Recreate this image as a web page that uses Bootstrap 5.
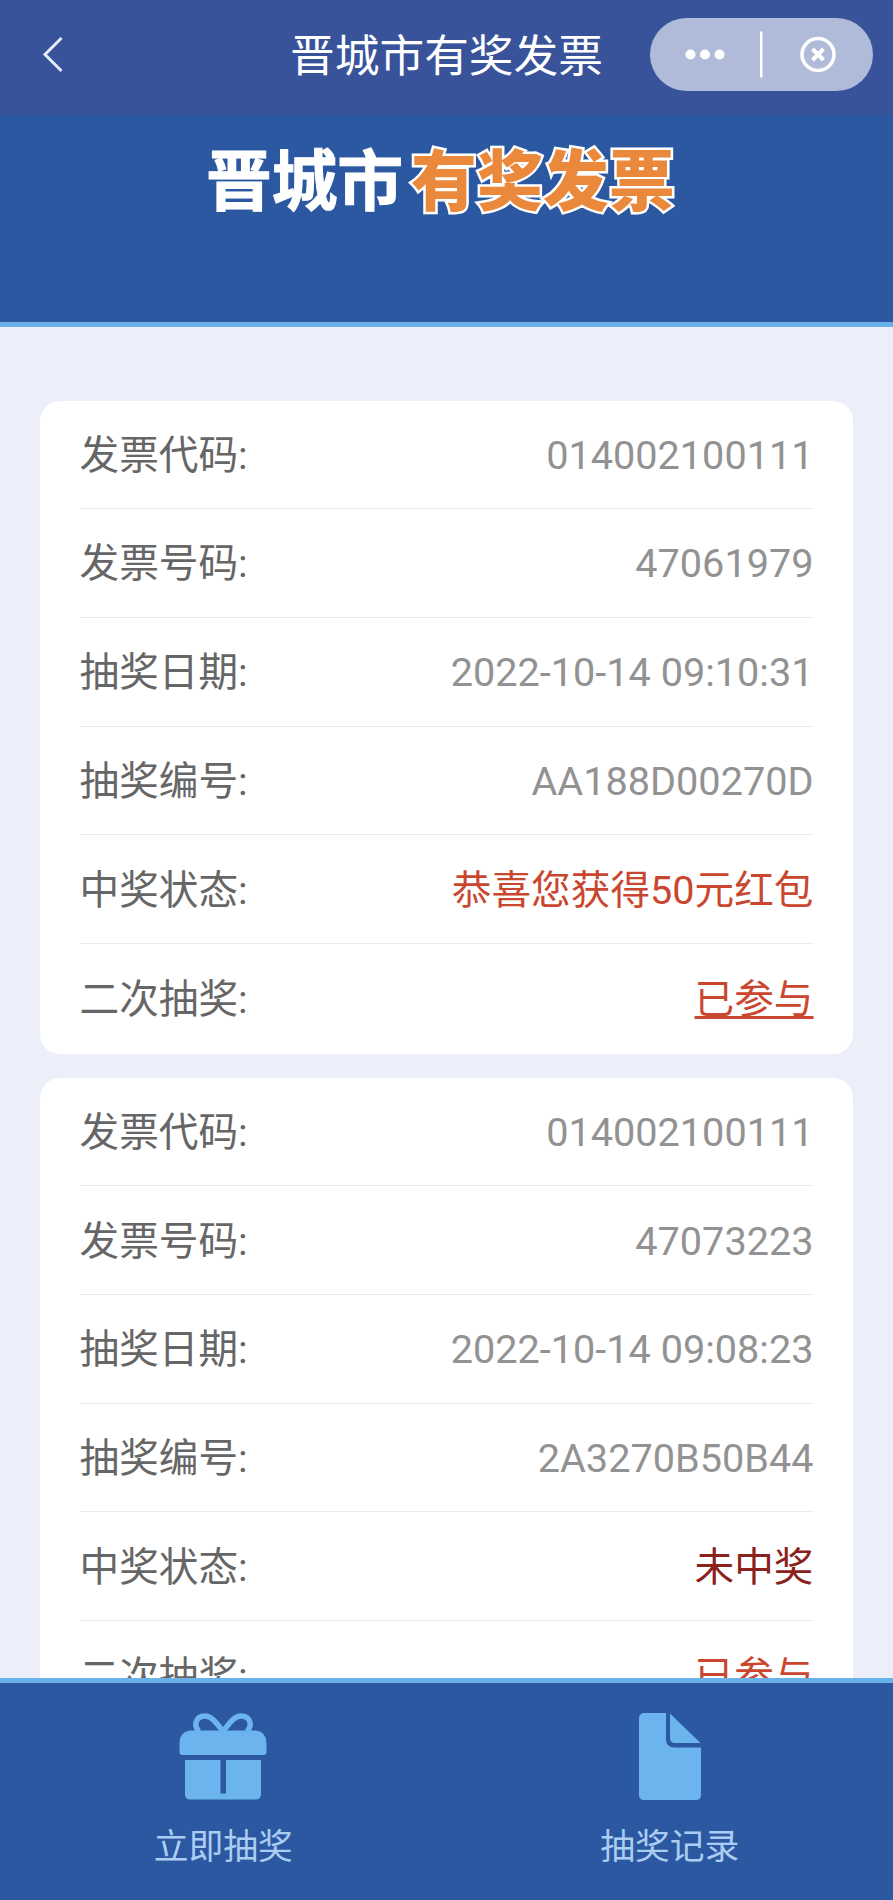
<!DOCTYPE html>
<html lang="zh-CN">
<head>
<meta charset="utf-8">
<meta name="viewport" content="width=device-width, initial-scale=1">
<title>晋城市有奖发票</title>
<link href="https://cdn.jsdelivr.net/npm/bootstrap@5.3.0/dist/css/bootstrap.min.css" rel="stylesheet">
<style>
body{font-family:Roboto,"Noto Sans CJK SC",sans-serif;background:#eceff9;height:1900px}
.topbar{height:115px;background:#39539b;padding:0 20px 7px;display:grid;grid-template-columns:1fr auto 1fr}
.topbar a{padding:2px 0 0 20px}
.topbar h1{font-size:44.7px;line-height:60px;font-weight:400;padding-top:5px}
.capsule{width:223px;height:73px;background:#b0bbda}
.hero{height:212px;background:#2b58a1;border-bottom:5px solid #68b1e9;padding-top:23px;padding-left:206px;font-family:"Noto Sans CJK SC",sans-serif;font-size:65.7px;line-height:78px;font-weight:900}
.hero .city{margin-right:8px;font-weight:700;-webkit-text-stroke:1px #fff}
.hero .prize{color:#ea883c;letter-spacing:.3px;-webkit-text-stroke:5px #fff;paint-order:stroke fill}
.records{padding:74px 40px 0;gap:24.6px}
.ticket{border-radius:20px;padding:0 39px 0 39.5px;background:#fff;--bs-card-border-width:0}
.line{height:108.76px;padding-top:3px;font-size:39.65px;line-height:50px;color:#666;border-bottom:1px solid #ebebeb}
.line:first-child{height:108.1px}
.line:last-child{height:109.42px;border-bottom:0;padding-top:2px}
.val{color:#929292;padding-right:.5px}
.red{color:#c9472f}
.dark{color:#8b211b}
.done{color:#c9472f;padding-right:.5px;text-decoration:underline;text-decoration-thickness:3px;text-underline-offset:3px;text-decoration-skip-ink:none}
.tabs{height:222px;background:#2b58a1;border-top:5px solid #68b1e9;color:#abcdf3;font-size:34.8px;line-height:44px}
.tabs a{color:inherit;padding-top:30px;gap:24px}
.tabs svg{fill:#6bb4ee}
</style>
</head>
<body class="d-flex flex-column overflow-hidden">
<header class="topbar flex-shrink-0 align-items-center text-white">
  <a href="#" aria-label="返回"><svg width="26" height="40" viewBox="0 0 26 40" class="d-block" fill="none" stroke="#e4ebfb" stroke-width="3"><path d="M21.500 3 5 19.500 21.500 36"/></svg></a>
  <h1 class="m-0">晋城市有奖发票</h1>
  <div class="d-flex justify-content-end align-items-center">
    <div class="capsule rounded-pill flex-shrink-0">
      <svg width="223" height="73" viewBox="0 0 223 73" class="d-block"><g fill="#fff"><circle cx="40.500" cy="36.500" r="5"/><circle cx="55" cy="36.500" r="5"/><circle cx="69.500" cy="36.500" r="5"/><path d="M110 13.500h2.500v46H110z"/></g><g fill="none" stroke="#fff"><circle cx="168" cy="36.500" r="16" stroke-width="3.500"/><path d="m162.500 31 11 11m0-11-11 11" stroke-width="4"/></g></svg>
    </div>
  </div>
</header>
<section class="hero flex-shrink-0 d-flex text-white text-nowrap"><span class="city">晋城市</span><span class="prize">有奖发票</span></section>
<main class="records flex-grow-1 overflow-hidden d-flex flex-column" style="min-height:0">
  <article class="card ticket flex-shrink-0">
    <div class="line d-flex justify-content-between align-items-center"><span>发票代码:</span><span class="val">014002100111</span></div>
    <div class="line d-flex justify-content-between align-items-center"><span>发票号码:</span><span class="val">47061979</span></div>
    <div class="line d-flex justify-content-between align-items-center"><span>抽奖日期:</span><span class="val">2022-10-14 09:10:31</span></div>
    <div class="line d-flex justify-content-between align-items-center"><span>抽奖编号:</span><span class="val">AA188D00270D</span></div>
    <div class="line d-flex justify-content-between align-items-center"><span>中奖状态:</span><span class="val red">恭喜您获得50元红包</span></div>
    <div class="line d-flex justify-content-between align-items-center"><span>二次抽奖:</span><a href="#" class="done">已参与</a></div>
  </article>
  <article class="card ticket flex-shrink-0">
    <div class="line d-flex justify-content-between align-items-center"><span>发票代码:</span><span class="val">014002100111</span></div>
    <div class="line d-flex justify-content-between align-items-center"><span>发票号码:</span><span class="val">47073223</span></div>
    <div class="line d-flex justify-content-between align-items-center"><span>抽奖日期:</span><span class="val">2022-10-14 09:08:23</span></div>
    <div class="line d-flex justify-content-between align-items-center"><span>抽奖编号:</span><span class="val">2A3270B50B44</span></div>
    <div class="line d-flex justify-content-between align-items-center"><span>中奖状态:</span><span class="val dark">未中奖</span></div>
    <div class="line d-flex justify-content-between align-items-center"><span>二次抽奖:</span><a href="#" class="done">已参与</a></div>
  </article>
</main>
<nav class="tabs flex-shrink-0 d-flex">
  <a href="#" class="w-50 d-flex flex-column align-items-center text-decoration-none">
    <svg width="88" height="88" viewBox="0 0 88 88"><path d="M11 17.500H77Q87.500 19 87.500 30V39Q87.500 42 84.500 42H3.500Q.500 42 .500 39V30Q.500 19 11 17.500z"/><path d="M6 47H41.500V80.500H47V47H82V81Q82 86.500 76.500 86.500H11.500Q6 86.500 6 81z"/><path d="M44 18.500C36 8 32 3 26 3 17 3 14 12 20 18.500M44 18.500C52 8 56 3 62 3 71 3 74 12 68 18.500" fill="none" stroke="#6bb4ee" stroke-width="5.500"/></svg>
    <span>立即抽奖</span>
  </a>
  <a href="#" class="w-50 d-flex flex-column align-items-center text-decoration-none">
    <svg width="62" height="88" viewBox="0 0 62 88"><path d="M5.500 0H27V26Q27 34.500 35.500 34.500H62V82Q62 87 57 87H5Q0 87 0 82V5.500Q0 0 5.500 0z"/><path d="M31 .500 61.500 30H36Q31 30 31 25z"/></svg>
    <span>抽奖记录</span>
  </a>
</nav>
<script src="https://cdn.jsdelivr.net/npm/bootstrap@5.3.0/dist/js/bootstrap.bundle.min.js"></script>
</body>
</html>
